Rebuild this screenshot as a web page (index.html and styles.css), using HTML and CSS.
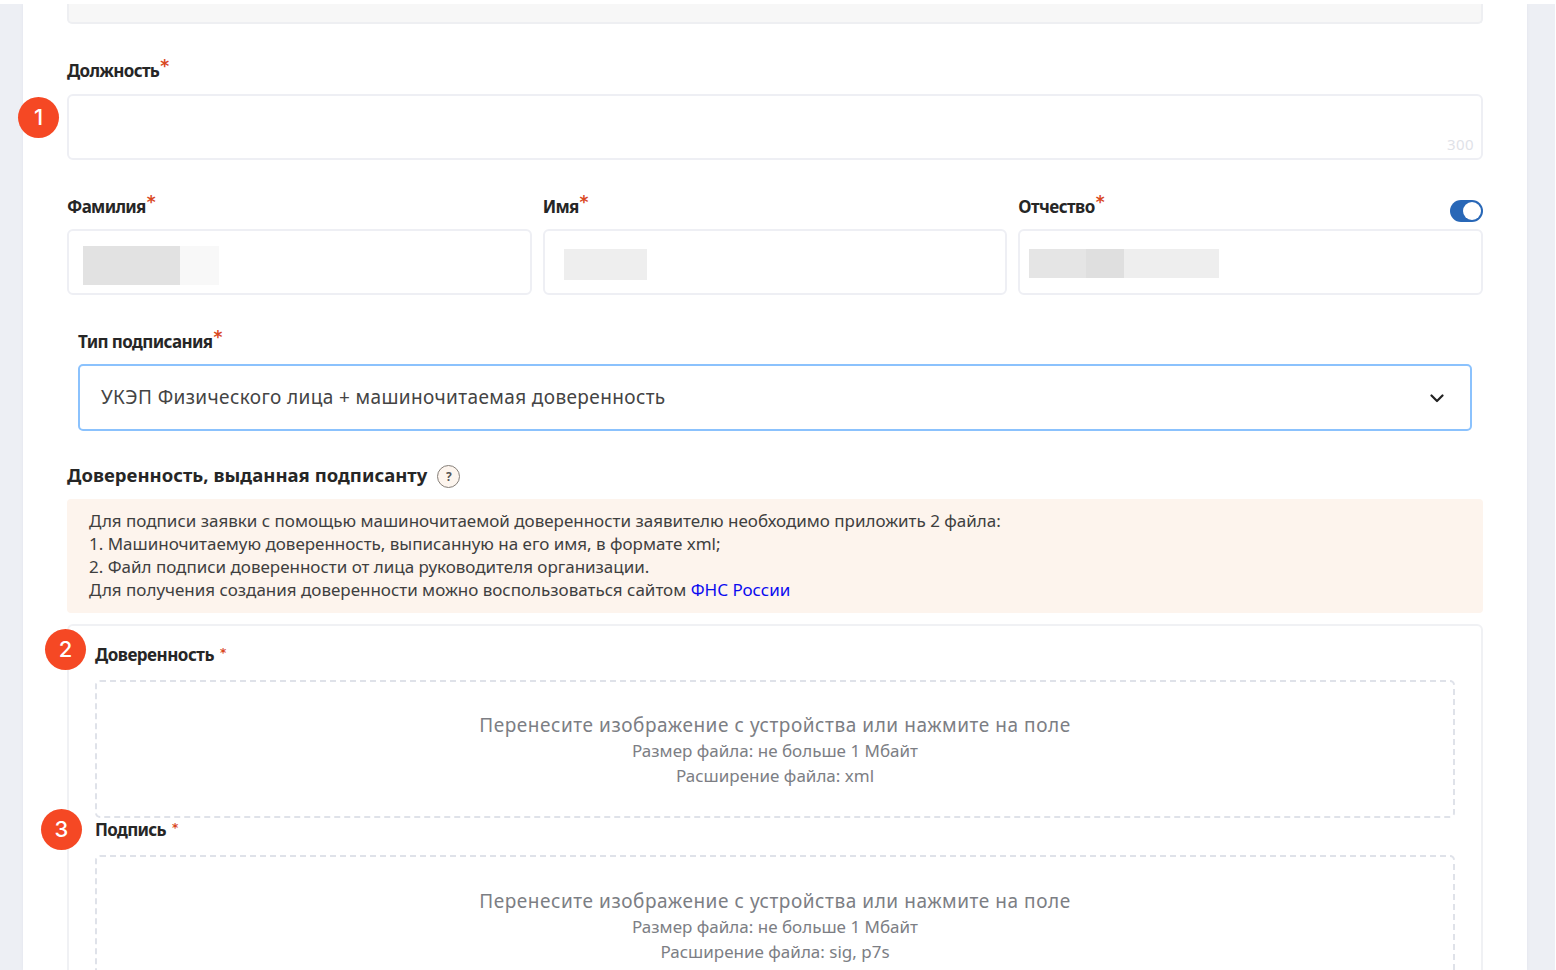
FILE: index.html
```html
<!DOCTYPE html>
<html lang="ru">
<head>
<meta charset="utf-8">
<title>Подписант</title>
<link rel="stylesheet" href="styles.css">
</head>
<body>
<div class="page">
  <main class="sheet">
    <div class="field-end"></div>

    <section class="group position">
      <label class="label">Должность<span class="req">*</span></label>
      <div class="input area"><span class="counter">300</span></div>
      <span class="step step-1">1</span>
    </section>

    <section class="names">
      <div class="group">
        <label class="label">Фамилия<span class="req">*</span></label>
        <div class="input masked m-surname"><i class="tone-b"></i><i class="tone-e"></i></div>
      </div>
      <div class="group">
        <label class="label">Имя<span class="req">*</span></label>
        <div class="input masked m-name"><i class="tone-d"></i></div>
      </div>
      <div class="group">
        <div class="label-row">
          <label class="label l-patronymic">Отчество<span class="req">*</span></label>
          <span class="toggle"></span>
        </div>
        <div class="input masked m-patronymic"><i class="tone-c"></i><i class="tone-a"></i><i class="tone-d"></i></div>
      </div>
    </section>

    <section class="group signing">
      <label class="label l-type">Тип подписания<span class="req">*</span></label>
      <div class="input select">
        <span class="value">УКЭП Физического лица + машиночитаемая доверенность</span>
        <svg class="chevron" viewBox="0 0 14 9" width="14" height="9"><path d="M1.5 1.5 L7 7 L12.5 1.5"/></svg>
      </div>
    </section>

    <div class="heading">
      <h2 class="title">Доверенность, выданная подписанту</h2>
      <span class="help">?</span>
    </div>

    <div class="notice">
      <p>Для подписи заявки с помощью машиночитаемой доверенности заявителю необходимо приложить 2 файла:</p>
      <p>1. Машиночитаемую доверенность, выписанную на его имя, в формате xml;</p>
      <p>2. Файл подписи доверенности от лица руководителя организации.</p>
      <p>Для получения создания доверенности можно воспользоваться сайтом <a class="link">ФНС России</a></p>
    </div>

    <section class="uploads">
      <div class="upload">
        <label class="label l-poa">Доверенность<span class="req small">*</span></label>
        <div class="drop">
          <p class="drop-title">Перенесите изображение с устройства или нажмите на поле</p>
          <p class="drop-size">Размер файла: не больше 1 Мбайт</p>
          <p class="drop-ext">Расширение файла: xml</p>
        </div>
        <span class="step step-2">2</span>
      </div>
      <div class="upload second">
        <label class="label">Подпись<span class="req small">*</span></label>
        <div class="drop">
          <p class="drop-title">Перенесите изображение с устройства или нажмите на поле</p>
          <p class="drop-size">Размер файла: не больше 1 Мбайт</p>
          <p class="drop-ext">Расширение файла: sig, p7s</p>
        </div>
        <span class="step step-3">3</span>
      </div>
    </section>
  </main>
</div>
</body>
</html>
```
FILE: styles.css
```css
* { box-sizing: border-box; }
html, body { height: 100%; }
body {
  margin: 0;
  padding: 4px 1px 0 0;
  overflow: hidden;
  background: #fff;
  color: #262626;
  font-family: "Noto Sans", "Open Sans", sans-serif;
}
p, h2 { margin: 0; }
.page { height: 966px; padding: 0 28px 0 23px; background: #edeff4; overflow: hidden; }
.sheet {
  height: 966px;
  padding: 0 44px;
  background: #fff;
  box-shadow: 0 0 3px #dfe3ec;
}
.field-end {
  height: 20px;
  border: 2px solid #eeeff2;
  border-top: 0;
  border-radius: 0 0 5px 5px;
  background: #f7f7f7;
}
.group { position: relative; }
.position { margin-top: 35px; }
.label {
  display: block;
  height: 24px;
  line-height: 24px;
  font-size: 17px;
  font-weight: 700;
  letter-spacing: -0.68px;
  white-space: nowrap;
}
.req {
  display: inline-block;
  margin-left: 1px;
  color: #d9481f;
  font-family: "DejaVu Sans", sans-serif;
  font-size: 17px;
  line-height: 10px;
  transform: translateY(-5px);
}
.req.small { margin-left: 6px; font-size: 12px; transform: translateY(-4px); }
.l-poa { letter-spacing: -0.5px; }
.l-type { letter-spacing: -0.6px; }
.l-patronymic { letter-spacing: -0.55px; }
.input {
  height: 66px;
  margin-top: 11px;
  border: 2px solid #eeeff4;
  border-radius: 6px;
  background: #fff;
}
.area { display: flex; align-items: flex-end; justify-content: flex-end; padding: 0 7px 5px; }
.counter { color: #dfe2e8; font-size: 15px; line-height: 18px; letter-spacing: 0.4px; }
.names { display: grid; grid-template-columns: repeat(3, 1fr); gap: 11px; margin-top: 34px; }
.names .label { line-height: 25px; }
.label-row { display: flex; justify-content: space-between; height: 24px; }
.toggle {
  width: 33px;
  height: 22px;
  margin-top: 6px;
  padding: 2px;
  border-radius: 11px;
  background: #2867b7;
}
.toggle::before {
  content: "";
  display: block;
  width: 18px;
  height: 18px;
  margin-left: 11px;
  border-radius: 50%;
  background: #fff;
}
.masked { display: flex; align-items: flex-start; }
.masked i { display: block; height: 100%; }
.m-surname { padding: 15px 14px 8px; }
.m-surname i:first-child { width: 97px; }
.m-surname i:last-child { width: 39px; }
.m-name { padding: 18px 19px 13px; }
.m-name i { width: 83px; }
.m-patronymic { padding: 18px 9px 15px; }
.m-patronymic i:nth-child(1) { width: 57px; }
.m-patronymic i:nth-child(2) { width: 38px; }
.m-patronymic i:nth-child(3) { width: 95px; }
.tone-a { background: #dfdfdf; }
.tone-b { background: #e2e2e2; }
.tone-c { background: #e5e5e5; }
.tone-d { background: #eee; }
.tone-e { background: #f8f8f8; }
.signing { margin: 35px 11px 0; }
.select {
  display: flex;
  align-items: center;
  justify-content: space-between;
  height: 67px;
  margin-top: 10px;
  padding: 0 26px 0 21px;
  border-color: #8bc2fd;
  border-radius: 5px;
}
.value { padding-bottom: 2px; color: #444; font-size: 19px; letter-spacing: 0.38px; white-space: nowrap; }
.chevron { margin-top: 1px; fill: none; stroke: #222; stroke-width: 2.2; stroke-linecap: round; stroke-linejoin: round; }
.heading { display: flex; align-items: center; gap: 10px; height: 30px; margin-top: 30px; }
.title { padding-bottom: 3px; font-size: 18.5px; line-height: 28px; font-weight: 700; letter-spacing: 0.03px; white-space: nowrap; }
.help {
  width: 23px;
  height: 23px;
  border: 1.5px solid #857f79;
  border-radius: 50%;
  background: #fdf5ee;
  color: #555;
  font-size: 12px;
  font-weight: 700;
  line-height: 21px;
  text-align: center;
}
.notice {
  height: 114px;
  margin-top: 8px;
  padding: 9.6px 22px;
  border-radius: 4px;
  background: #fdf4ed;
  color: #3f3f3f;
  font-size: 17px;
  line-height: 23.2px;
  letter-spacing: -0.015px;
  white-space: nowrap;
}
.link { color: #0b0bf0; }
.uploads {
  height: 400px;
  margin-top: 11px;
  padding: 17px 26px 0;
  border: 2px solid #f0f1f4;
  border-radius: 6px;
}
.upload { position: relative; }
.upload .label { height: 26px; line-height: 24px; }
.drop {
  height: 138px;
  margin-top: 11px;
  padding-top: 30px;
  border: 2px dashed #dfe2e9;
  border-radius: 5px;
  color: #7c7e84;
  text-align: center;
  white-space: nowrap;
}
.second .drop { padding-top: 31px; }
.drop-title { font-size: 19px; line-height: 26px; letter-spacing: 0.55px; }
.drop-size, .drop-ext { font-size: 17px; line-height: 25px; }
.step {
  position: absolute;
  width: 41px;
  height: 41px;
  border-radius: 50%;
  background: #f54824;
  color: #fff;
  font-family: Inter, sans-serif;
  font-size: 22px;
  font-weight: 500;
  line-height: 40px;
  text-align: center;
}
.step-1 { left: -49px; top: 38px; }
.step-2 { left: -50px; top: -14px; }
.step-3 { left: -54px; top: -9px; }
```
